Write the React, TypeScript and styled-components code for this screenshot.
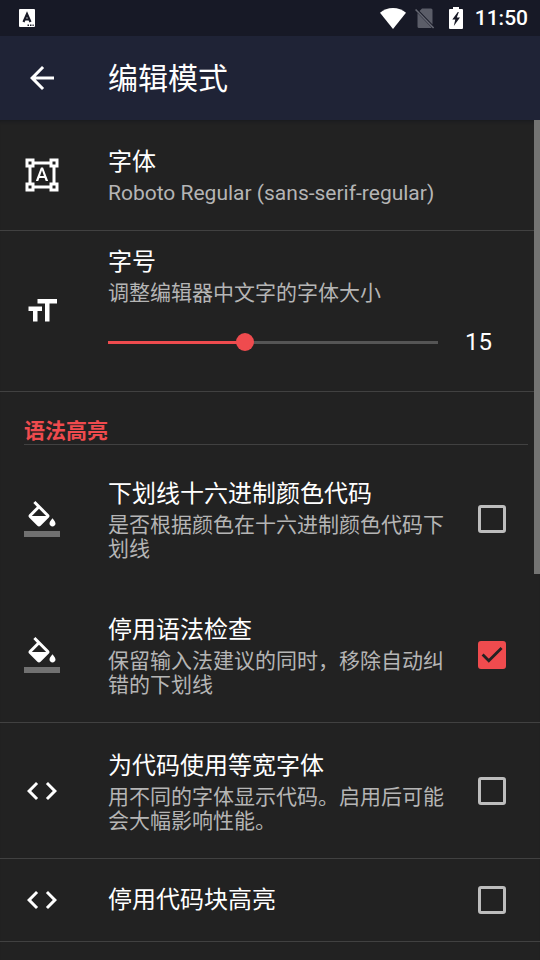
import React, { useId, useState } from "react";
import styled, { createGlobalStyle } from "styled-components";

const ACCENT = "#ef4b4e";
const SURFACE = "#222222";
const DIVIDER = "#414141";

const GlobalStyle = createGlobalStyle`
  *, *::before, *::after { box-sizing: border-box; }
  body {
    margin: 0;
    background: ${SURFACE};
    color: #ffffff;
    font-family: Roboto, "Noto Sans CJK SC", sans-serif;
  }
`;

const Screen = styled.div`
  display: flex;
  flex-direction: column;
  height: 100vh;
  overflow: hidden;
`;

const StatusBar = styled.div`
  display: flex;
  flex: none;
  align-items: center;
  justify-content: space-between;
  height: 36px;
  padding: 0 12px 0 19px;
  background: #171926;
`;

const StatusIcons = styled.div`
  display: flex;
  align-items: center;
`;

const StatusIcon = styled.svg<{ $gap?: number }>`
  display: block;
  flex: none;
  margin-right: ${({ $gap = 0 }) => $gap}px;
`;

const Clock = styled.span`
  font-size: 21px;
  line-height: 38px;
  font-weight: 500;
`;

const Toolbar = styled.header`
  display: flex;
  flex: none;
  align-items: center;
  height: 84px;
  padding: 0 24px;
  background: #1f2336;
`;

const BackButton = styled.button`
  display: flex;
  width: 36px;
  height: 36px;
  margin-right: 48px;
  padding: 0;
  border: 0;
  background: none;
  color: inherit;
  cursor: pointer;
`;

const ToolbarTitle = styled.h1`
  margin: 0;
  padding-top: 2px;
  font-size: 30px;
  line-height: 40px;
  font-weight: 400;
`;

const Content = styled.main`
  position: relative;
  flex: 1;
  min-height: 0;
  overflow: hidden;
  box-shadow: inset 0 4px 3px -2px #1b1c1f;
`;

const ScrollThumb = styled.div`
  position: absolute;
  top: 0;
  right: 0;
  width: 6px;
  height: 54%;
  background: #747473;
`;

const ROW_PADDING = {
  single: "23px 30px 23px 24px",
  double: "25px 30px 25px 24px",
  triple: "26px 30px 25px 24px",
  slider: "14px 30px 14px 24px",
};

const Row = styled.div<{ $divider?: boolean; $kind: keyof typeof ROW_PADDING }>`
  display: flex;
  align-items: center;
  padding: ${({ $kind }) => ROW_PADDING[$kind]};
  border-bottom: 1px solid ${({ $divider }) => ($divider ? DIVIDER : "transparent")};
`;

const RowIcon = styled.svg`
  display: block;
  flex: none;
  width: 36px;
  height: 36px;
  fill: currentColor;
`;

const RowText = styled.div`
  display: flex;
  flex: 1;
  flex-direction: column;
  gap: 2px;
  min-width: 0;
  margin-left: 48px;
`;

const Title = styled.label`
  font-size: 24px;
  line-height: 34px;
`;

const FontButton = styled.button`
  display: block;
  width: 100%;
  padding: 0;
  border: 0;
  background: none;
  color: inherit;
  font: inherit;
  text-align: left;
  cursor: pointer;
`;

const Summary = styled.span`
  color: #b5b5b5;
  font-size: 21px;
  line-height: 24px;
`;

const CategoryHeader = styled.h2`
  margin: 26px 12px 6px 24px;
  border-bottom: 1px solid ${DIVIDER};
  color: ${ACCENT};
  font-size: 21px;
  line-height: 26px;
  font-weight: 700;
`;

const SliderLine = styled.div`
  display: flex;
  align-items: center;
  height: 46px;
  margin: 12px 0;
`;

const Slider = styled.input`
  flex: 1;
  min-width: 0;
  height: 36px;
  margin: 0 0 0 -9px;
  appearance: none;
  background: none;
  cursor: pointer;

  &::-webkit-slider-runnable-track {
    height: 3px;
    margin: 0 9px;
    background: linear-gradient(
      to right,
      ${ACCENT} var(--filled),
      #555555 var(--filled)
    );
  }

  &::-webkit-slider-thumb {
    position: relative;
    width: 18px;
    height: 18px;
    margin-top: -8px;
    border-radius: 50%;
    appearance: none;
    background: ${ACCENT};
  }
`;

const SliderValue = styled.output`
  width: 63px;
  font-size: 24px;
  line-height: 34px;
  text-align: center;
`;

const CheckArea = styled.span`
  display: grid;
  flex: none;
  place-items: center;
  width: 36px;
  height: 36px;
  margin-left: 24px;

  > * { grid-area: 1 / 1; }
`;

const Checkbox = styled.input`
  width: 28px;
  height: 28px;
  margin: 0;
  border: 3px solid #bdbdbd;
  border-radius: 3px;
  appearance: none;
  cursor: pointer;

  &:checked {
    border-color: ${ACCENT};
    background: ${ACCENT};
  }

  & + svg { visibility: hidden; }
  &:checked + svg { visibility: visible; }
`;

const CheckMark = styled.svg`
  width: 28px;
  height: 28px;
  pointer-events: none;
`;

const FILL_PATH =
  "M16.56 8.94L7.62 0 6.21 1.41l2.38 2.38-5.15 5.15c-.59.59-.59 1.54 0 2.12l5.5 5.5c.29.29.68.44 1.06.44s.77-.15 1.06-.44l5.5-5.5c.59-.58.59-1.53 0-2.12zM5.21 10L10 5.21 14.79 10H5.21zM19 11.5s-2 2.17-2 3.5c0 1.1.9 2 2 2s2-.9 2-2c0-1.33-2-3.5-2-3.5z";

const FillIcon = () => (
  <RowIcon viewBox="0 0 24 24" aria-hidden="true">
    <path d={FILL_PATH} />
    <path d="M0 20h24v4H0z" fillOpacity=".36" />
  </RowIcon>
);

const CodeIcon = () => (
  <RowIcon viewBox="0 0 24 24" aria-hidden="true">
    <path d="M9.4 16.6L4.8 12l4.6-4.6L8 6l-6 6 6 6 1.4-1.4zm5.2 0l4.6-4.6-4.6-4.6L16 6l6 6-6 6-1.4-1.4z" />
  </RowIcon>
);

const ShapesIcon = () => (
  <RowIcon viewBox="0 0 24 24" aria-hidden="true">
    <path d="M23 7V1h-6v2H7V1H1v6h2v10H1v6h6v-2h10v2h6v-6h-2V7h2zM3 3h2v2H3V3zm2 18H3v-2h2v2zm12-2H7v-2H5V7h2V5h10v2h2v10h-2v2zm4 2h-2v-2h2v2zM19 5V3h2v2h-2zm-5.27 9h-3.49l-.73 2H7.89l3.4-9h1.4l3.41 9h-1.63l-.74-2zm-3.04-1.26h2.61L12 8.91l-1.31 3.83z" />
  </RowIcon>
);

const SizeIcon = () => (
  <RowIcon viewBox="0 0 24 24" aria-hidden="true">
    <path d="M9 4v3h5v12h3V7h5V4H9zm-6 8h3v7h3v-7h3V9H3v3z" />
  </RowIcon>
);

interface CheckRowProps {
  icon: React.ReactNode;
  title: string;
  summary?: string;
  defaultChecked?: boolean;
  divider?: boolean;
}

function CheckRow({ icon, title, summary, defaultChecked, divider }: CheckRowProps) {
  const id = useId();
  return (
    <Row $divider={divider} $kind={summary ? "triple" : "single"}>
      {icon}
      <RowText>
        <Title htmlFor={id}>{title}</Title>
        {summary && <Summary id={`${id}-summary`}>{summary}</Summary>}
      </RowText>
      <CheckArea>
        <Checkbox
          id={id}
          type="checkbox"
          defaultChecked={defaultChecked}
          aria-describedby={summary ? `${id}-summary` : undefined}
        />
        <CheckMark viewBox="0 0 28 28" aria-hidden="true">
          <path d="M4.6 13.6l6.2 6.2L23.6 7" fill="none" stroke={SURFACE} strokeWidth="2.8" />
        </CheckMark>
      </CheckArea>
    </Row>
  );
}

const MIN_SIZE = 8;
const MAX_SIZE = 25;

function FontSizeRow() {
  const id = useId();
  const [size, setSize] = useState(15);
  const filled = ((size - MIN_SIZE) / (MAX_SIZE - MIN_SIZE)) * 100;
  return (
    <Row $divider $kind="slider">
      <SizeIcon />
      <RowText>
        <Title htmlFor={id}>字号</Title>
        <Summary>调整编辑器中文字的字体大小</Summary>
        <SliderLine>
          <Slider
            id={id}
            type="range"
            min={MIN_SIZE}
            max={MAX_SIZE}
            value={size}
            onChange={(e) => setSize(Number(e.target.value))}
            style={{ "--filled": `${filled}%` } as React.CSSProperties}
          />
          <SliderValue htmlFor={id}>{size}</SliderValue>
        </SliderLine>
      </RowText>
    </Row>
  );
}

export default function App() {
  return (
    <Screen>
      <GlobalStyle />
      <StatusBar>
        <StatusIcon width="16" height="18" viewBox="0 0 16 18" aria-hidden="true">
          <rect width="16" height="18" rx="1" fill="#fff" />
          <path d="M4.5 13L8 5l3.5 8M5.8 10.5h4.4" fill="none" stroke="#171926" strokeWidth="2.2" />
          <path d="M8.5 15.5h1.5v1.5H8.5zM11 15.5h1.5v1.5H11zM13.5 15.5h1.2v1.5h-1.2z" fill="#171926" />
        </StatusIcon>
        <StatusIcons>
          <StatusIcon $gap={9} width="26" height="21" viewBox="0 0 26 21" aria-hidden="true">
            <path d="M13 21L0 4.8C3.5 1.8 8 0 13 0s9.500 1.8 13 4.8z" fill="#fff" />
          </StatusIcon>
          <StatusIcon $gap={14} width="20" height="21" viewBox="0 0 20 21" aria-hidden="true">
            <path d="M7 .5h9q1.5 0 1.5 1.5v14.500L4.500 3zM2.500 5L16.500 19.500q-.4.500-1 .5H4q-1.500 0-1.500-1.500z" fill="#5b5d68" />
            <path d="M.6 1.500l18 18.500" fill="none" stroke="#666873" strokeWidth="1.600" />
          </StatusIcon>
          <StatusIcon $gap={12} width="14" height="22" viewBox="0 0 14 22" aria-hidden="true">
            <path d="M4 0h6v2h3q1 0 1 1v18q0 1-1 1H1q-1 0-1-1V3q0-1 1-1h3z" fill="#fff" />
            <path d="M8.800 5L3.300 12.500h3L4.800 19l6.200-8.500H7.800l2-5.500z" fill="#171926" />
          </StatusIcon>
          <Clock>11:50</Clock>
        </StatusIcons>
      </StatusBar>

      <Toolbar>
        <BackButton type="button" aria-label="返回">
          <RowIcon viewBox="0 0 24 24" aria-hidden="true">
            <path d="M20 11H7.83l5.59-5.59L12 4l-8 8 8 8 1.41-1.41L7.83 13H20v-2z" />
          </RowIcon>
        </BackButton>
        <ToolbarTitle>编辑模式</ToolbarTitle>
      </Toolbar>

      <Content>
        <FontButton type="button">
          <Row as="span" $divider $kind="double">
            <ShapesIcon />
            <RowText as="span">
              <Title as="span">字体</Title>
              <Summary>Roboto Regular (sans-serif-regular)</Summary>
            </RowText>
          </Row>
        </FontButton>
        <FontSizeRow />

        <CategoryHeader>语法高亮</CategoryHeader>
        <CheckRow
          icon={<FillIcon />}
          title="下划线十六进制颜色代码"
          summary="是否根据颜色在十六进制颜色代码下划线"
        />
        <CheckRow
          icon={<FillIcon />}
          title="停用语法检查"
          summary="保留输入法建议的同时，移除自动纠错的下划线"
          defaultChecked
          divider
        />
        <CheckRow
          icon={<CodeIcon />}
          title="为代码使用等宽字体"
          summary="用不同的字体显示代码。启用后可能会大幅影响性能。"
          divider
        />
        <CheckRow icon={<CodeIcon />} title="停用代码块高亮" divider />
        <ScrollThumb />
      </Content>
    </Screen>
  );
}
